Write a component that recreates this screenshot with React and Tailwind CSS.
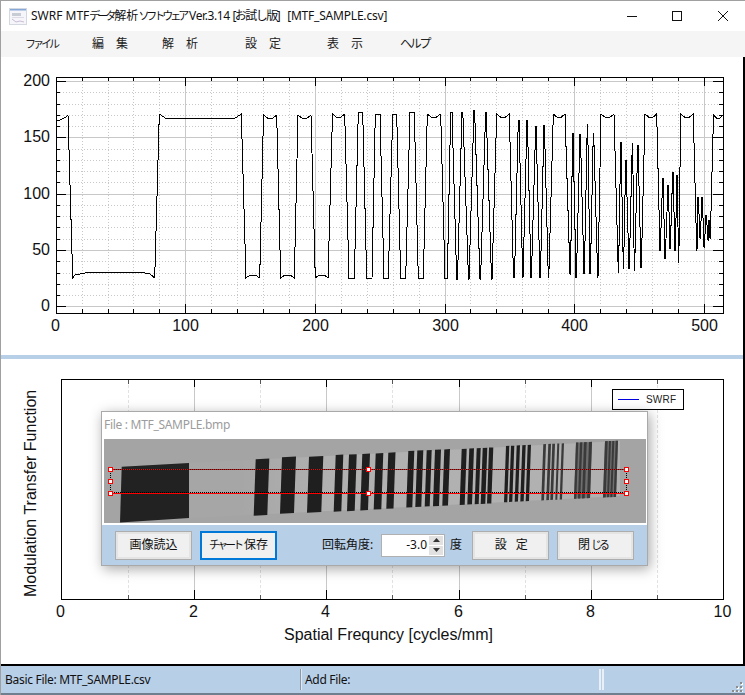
const uiFont = "font-['Noto_Sans','Noto_Sans_CJK_JP',sans-serif]";

// plateau segments of the scan line: [start, end, y], high and low in turn
const SIGNAL = [
  [159.3, 241.3, 114], [246, 259.7, 278], [263.5, 276.7, 115], [280.7, 294.3, 278], [298, 311, 115],
  [315.3, 328, 278], [332.5, 344.7, 114], [349, 354.3, 278], [358.3, 362.7, 112], [366.7, 372, 278],
  [375.3, 380, 114], [384, 388.3, 278], [392.7, 396.7, 114], [400.7, 405.7, 278], [410, 414.3, 112],
  [418.3, 423.3, 278], [427.3, 440.7, 114], [445, 447.3, 278], [450.7, 452, 112], [456.7, 457.5, 279],
  [462, 462.8, 112], [468.5, 469, 279], [474, 474.6, 110], [480, 480.6, 279], [485.6, 486.2, 112],
  [491.5, 492, 279], [496.7, 509.3, 114], [513.5, 514.5, 277], [518.3, 519, 120], [522.7, 523, 277],
  [527, 527.4, 120], [531, 531.4, 277], [535.7, 536, 126], [540, 540.4, 277], [544, 544.4, 125],
  [548.3, 548.8, 277], [553.3, 565, 114], [570, 570.5, 274], [572.7, 573, 133], [576, 576.4, 277],
  [580, 580.4, 134], [584, 584.4, 273], [587.3, 587.7, 124], [590, 590.4, 273], [593.3, 593.7, 133],
  [597.7, 598, 277], [601, 614, 114], [618.3, 618.6, 272], [620.7, 621, 142], [623.3, 623.6, 268],
  [625.7, 626, 160], [629, 629.3, 268], [632.3, 632.6, 143], [634.3, 634.6, 270], [637.7, 638, 145],
  [641, 641.3, 267], [645, 656.7, 114], [660, 660.3, 250], [662.7, 663, 178], [665, 665.3, 258],
  [668, 668.3, 185], [670, 670.3, 248], [672.7, 673, 172], [675, 675.3, 250], [677, 677.3, 175],
  [678.5, 678.8, 262], [680.7, 693.3, 114], [696.7, 697, 250], [698, 698.3, 197], [700, 700.3, 238],
  [702, 702.3, 197], [704, 704.3, 247], [706, 706.3, 215], [708, 708.3, 240], [709, 709.3, 220],
  [710, 710.3, 238], [713.5, 723, 115],
];

function signalPoints() {
  const pts = [[56, 121], [60, 120], [66, 117], [68, 115], [72.7, 278], [75, 275], [85, 273], [95, 272], [140, 272], [150, 274], [154.7, 278]];
  SIGNAL.forEach(([x0, x1, y]) => {
    const w = x1 - x0;
    const dir = y < 200 ? 1 : -1;
    if (w < 6) {
      pts.push([x0, y], [x1, y]);
    } else if (w > 40) {
      pts.push([x0, y], [x0 + 6, y + 4], [x1 - 6, y + 4], [x1, y]);
    } else {
      pts.push([x0, y], [x0 + w * 0.3, y + dir * 3], [x0 + w * 0.7, y + dir * 3], [x1, y]);
    }
  });
  return pts.map((p) => p.join(',')).join(' ');
}

const range = (from, to, step) => {
  const out = [];
  for (let v = from; v <= to; v += step) out.push(v);
  return out;
};

function WaveChart() {
  const px = (v) => Math.round(55.7 + 1.296 * v) + 0.5;
  const py = (v) => Math.round(306.3 - 1.1265 * v) + 0.5;
  return (
    <svg viewBox="1 57 742 298" className="block h-[298px] w-[742px] font-['Liberation_Sans',sans-serif] text-[16px]" shapeRendering="crispEdges">
      {range(20, 500, 20).filter((v) => v % 100).map((v) => (
        <g key={v}>
          <line x1={px(v)} x2={px(v)} y1="78" y2="313" stroke="#c8c8c8" strokeDasharray="1 2" />
          <line x1={px(v)} x2={px(v)} y1="78" y2="82" stroke="#000" />
          <line x1={px(v)} x2={px(v)} y1="309" y2="313" stroke="#000" />
        </g>
      ))}
      {range(0, 200, 10).filter((v) => v % 50).map((v) => (
        <g key={v}>
          <line x1="57" x2="723" y1={py(v)} y2={py(v)} stroke="#c8c8c8" strokeDasharray="1 2" />
          <line x1="57" x2="60" y1={py(v)} y2={py(v)} stroke="#000" />
          <line x1="719" x2="723" y1={py(v)} y2={py(v)} stroke="#000" />
        </g>
      ))}
      {range(0, 200, 50).map((v) => (
        <g key={v}>
          <line x1="57" x2="723" y1={py(v)} y2={py(v)} stroke="#c8c8c8" />
          <line x1="57" x2="66" y1={py(v)} y2={py(v)} stroke="#000" />
          <line x1="713" x2="723" y1={py(v)} y2={py(v)} stroke="#000" />
          <text x="50" y={py(v) + 4.5} textAnchor="end" fill="#111" shapeRendering="auto">{v}</text>
        </g>
      ))}
      {range(100, 500, 100).map((v) => (
        <g key={v}>
          <line x1={px(v)} x2={px(v)} y1="78" y2="313" stroke="#c8c8c8" />
          <line x1={px(v)} x2={px(v)} y1="78" y2="86" stroke="#000" />
          <line x1={px(v)} x2={px(v)} y1="304" y2="313" stroke="#000" />
          <text x={px(v)} y="331" textAnchor="middle" fill="#111">{v}</text>
        </g>
      ))}
      <text x="55.5" y="331" textAnchor="middle" fill="#111">0</text>
      <polyline points={signalPoints()} fill="none" stroke="#000" />
      <rect x="56.5" y="77.5" width="667" height="236" fill="none" stroke="#000" />
    </svg>
  );
}

function MtfChart() {
  const px = (v) => Math.round(61.3 + 66.2 * v) + 0.5;
  return (
    <svg viewBox="1 359 742 305" className="block h-[305px] w-[742px] font-['Liberation_Sans',sans-serif] text-[16px]" shapeRendering="crispEdges">
      {range(1, 9, 2).map((v) => (
        <g key={v}>
          <line x1={px(v)} x2={px(v)} y1="380" y2="599" stroke="#e2e2e2" strokeDasharray="3 2" />
          <line x1={px(v)} x2={px(v)} y1="380" y2="384" stroke="#555" />
          <line x1={px(v)} x2={px(v)} y1="595" y2="599" stroke="#555" />
        </g>
      ))}
      {range(2, 8, 2).map((v) => (
        <g key={v}>
          <line x1={px(v)} x2={px(v)} y1="380" y2="599" stroke="#c8c8c8" />
          <line x1={px(v)} x2={px(v)} y1="380" y2="387" stroke="#000" />
          <line x1={px(v)} x2={px(v)} y1="590" y2="599" stroke="#000" />
        </g>
      ))}
      <rect x="61.5" y="379.5" width="662" height="220" fill="none" stroke="#000" />
      {range(0, 10, 2).map((v) => (
        <text key={v} x={px(v) - 1} y="617" textAnchor="middle" fill="#111">{v}</text>
      ))}
      <text x="284" y="640" fill="#111">Spatial Frequncy [cycles/mm]</text>
      <text transform="translate(35.5 597) rotate(-90)" fill="#111">Modulation Transfer Function</text>
      <rect x="612.5" y="389.5" width="71" height="20" fill="#fff" stroke="#000" />
      <line x1="618" x2="639" y1="399.5" y2="399.5" stroke="#0000dd" />
      <text x="646" y="403" fill="#222" className="text-[10px] tracking-[0.2px]">SWRF</text>
    </svg>
  );
}

// bars of the test chart: [left, right, top at left, bottom at left]
const BARS = [
  [255.7, 269.3, 459.3, 515.7], [282, 296, 457.3, 513.7], [309, 323.3, 456.7, 512.7],
  [335.7, 343.3, 455, 511.7], [349, 356.7, 454.6, 511.2], [362.3, 370, 454, 510.5], [375.7, 383.3, 453.4, 509.6], [388.3, 395.5, 452.7, 508.8],
  [408.3, 414.3, 451, 507.5], [417.3, 423.3, 450.6, 507], [426.7, 431.7, 450.2, 506.6], [435, 441, 449.8, 506.2], [444.3, 450, 449.4, 505.8],
  [461.7, 466.7, 449, 505], [469.3, 474, 448.6, 504.6], [476.7, 480.7, 448.3, 504.3], [482.7, 487.3, 448, 504], [489, 493.3, 447.6, 503.6],
  [506, 509.3, 446, 502.3], [511, 514.3, 445.8, 502], [516.7, 520, 445.5, 501.7], [522.3, 525.7, 445.2, 501.5], [527.7, 531, 445, 501.2],
  [543.3, 546, 444.2, 500.4], [548.3, 551, 444, 500.2], [552.3, 555, 443.8, 500], [557.3, 559.3, 443.6, 499.8], [561.7, 564, 443.4, 499.6],
  [576, 578.3, 442.6, 498.8], [580, 582.3, 442.4, 498.6], [584, 586.7, 442.2, 498.4], [589, 592, 442, 498.2],
  [605, 607.7, 441.2, 497.4], [609, 611, 441, 497.2], [612.3, 614.3, 441, 497.2], [615.7, 618, 440.8, 497],
];

function Handle({ x, y }) {
  return <rect x={x - 2} y={y - 2} width="4" height="4" fill="#fff" stroke="#f00" />;
}

function ChartImage() {
  return (
    <svg viewBox="104 439 542 84" className="block h-[84px] w-[542px]">
      <defs>
        <linearGradient id="band" gradientUnits="userSpaceOnUse" x1="240" x2="330" y1="0" y2="0">
          <stop offset="0" stopColor="#a6a6a6" />
          <stop offset="1" stopColor="#b1b1b1" />
        </linearGradient>
      </defs>
      <rect x="104" y="439" width="542" height="84" fill="#a4a4a4" />
      <polygon points="190,463 620,441 620,496 190,518" fill="url(#band)" />
      <polygon points="121.7,466.7 189,463 189,518 120,522.5" fill="#222" />
      <polygon points="576,442.6 592,442 590,498 574,498.8" fill="#6e6e6e" />
      <polygon points="605,441.2 618,440.8 616,497 603,497.4" fill="#6e6e6e" />
      {BARS.map(([l, r, t, b]) => (
        <polygon key={l} points={`${l},${t} ${r},${t - (r - l) * 0.05} ${r - 2},${b - (r - l) * 0.05} ${l - 2},${b}`} fill={l > 540 ? '#3a3a3a' : '#1f1f1f'} />
      ))}
      <g shapeRendering="crispEdges">
        <line x1="110" x2="626" y1="469.5" y2="469.5" stroke="#f00" />
        <line x1="110" x2="626" y1="469.5" y2="469.5" stroke="#000" strokeDasharray="1 1" />
        <line x1="110" x2="626" y1="492.5" y2="492.5" stroke="#000" strokeDasharray="1 1" />
        <line x1="110" x2="626" y1="493.5" y2="493.5" stroke="#f00" />
        <line x1="110.5" x2="110.5" y1="469" y2="493" stroke="#000" strokeDasharray="1 1" />
        <line x1="626.5" x2="626.5" y1="469" y2="493" stroke="#000" strokeDasharray="1 1" />
        <Handle x={110.5} y={469.5} />
        <Handle x={110.5} y={481.5} />
        <Handle x={110.5} y={493.5} />
        <Handle x={368.5} y={469.5} />
        <Handle x={368.5} y={493.5} />
        <Handle x={626.5} y={469.5} />
        <Handle x={626.5} y={481.5} />
        <Handle x={626.5} y={493.5} />
      </g>
    </svg>
  );
}

// the original font sets kana condensed, so they get a smaller size and tighter pitch
function Kana({ children, className = '' }) {
  return <span className={`text-[11px] tracking-[-3px] ${className}`}>{children}</span>;
}

function DialogButton({ children, className = '', focused = false }) {
  return (
    <div
      className={`flex h-[29px] w-[77px] shrink-0 items-center justify-center bg-[#f0f0f0] text-[12px] text-[#111] ${
        focused ? 'border-2 border-[#0078d7]' : 'border border-[#adadad] shadow-[inset_0_0_0_2px_#e4e4e4]'
      } ${className}`}
    >
      {children}
    </div>
  );
}

function ImageDialog() {
  return (
    <div className={`absolute left-[100px] top-[52px] w-[547px] border border-[#a9a9a9] bg-white shadow-[2px_3px_12px_rgba(0,0,0,0.35)] ${uiFont}`}>
      <div className="flex h-[26px] items-center pl-[2px] text-[12px] tracking-[-0.3px] text-[#9c9c9c]">File : MTF_SAMPLE.bmp</div>
      <div className="mt-[1px] pl-[2px]">
        <ChartImage />
      </div>
      <div className="mt-[2px] flex h-[40px] items-center bg-[#b8cfe8] pl-[13px]">
        <DialogButton>画像読込</DialogButton>
        <DialogButton focused className="ml-[8px]">
          <Kana>チャート</Kana>
          <span className="ml-[3px]">保存</span>
        </DialogButton>
        <span className="ml-[45px] w-[53px] whitespace-nowrap text-[12px] text-[#111]">回転角度:</span>
        <div className="ml-[6px] flex h-[23px] w-[64px] items-center justify-end border border-[#b0b0b0] bg-white pr-[1px]">
          <span className="mr-[2px] text-[12px] text-[#111]">-3.0</span>
          <div className="flex w-[14px] flex-col gap-[1px]">
            <div className="flex h-[9px] items-center justify-center bg-[#e1e1e1]">
              <svg width="7" height="4" viewBox="0 0 7 4"><path d="M3.5 0 7 4H0z" fill="#333" /></svg>
            </div>
            <div className="flex h-[9px] items-center justify-center bg-[#e1e1e1]">
              <svg width="7" height="4" viewBox="0 0 7 4"><path d="M0 0h7L3.500 4z" fill="#333" /></svg>
            </div>
          </div>
        </div>
        <span className="ml-[5px] w-[22px] text-[12px] text-[#111]">度</span>
        <DialogButton className="tracking-[-1.5px]">設　定</DialogButton>
        <DialogButton className="ml-[8px] pr-[6px]">
          <span>閉</span>
          <Kana className="ml-[1px]">じる</Kana>
        </DialogButton>
      </div>
    </div>
  );
}

function AppIcon() {
  return (
    <svg width="18" height="17" viewBox="0 0 18 17" className="ml-[8px] shrink-0">
      <rect x="0.5" y="0.5" width="17" height="16" fill="#f6f6fa" stroke="#d4d8e0" />
      <rect x="1" y="1" width="16" height="1.500" fill="#86a8d8" />
      <rect x="3" y="5" width="9" height="3" fill="#c8ccd4" />
      <rect x="3" y="9" width="12" height="1" fill="#dcdce6" />
      <path d="M3 11l4 3 4-1 4 1" fill="none" stroke="#c8bcd6" />
    </svg>
  );
}

function WindowButtons() {
  return (
    <div className="ml-auto flex items-center">
      <svg width="10" height="10" viewBox="0 0 10 10" className="mr-[35px]"><path d="M0 5.500h10" stroke="#111" /></svg>
      <svg width="10" height="10" viewBox="0 0 10 10" className="mr-[36px]"><rect x="0.500" y="0.500" width="9" height="9" fill="none" stroke="#111" /></svg>
      <svg width="10" height="10" viewBox="0 0 10 10" className="mr-[17px]"><path d="M0 0l10 10M10 0 0 10" stroke="#111" /></svg>
    </div>
  );
}

function MenuBar() {
  return (
    <div className="flex h-[26px] items-center bg-[#f5f5f5] pl-[24px] text-[12px] text-[#222]">
      <Kana>ファイル</Kana>
      <span className="ml-[35px]">編　集</span>
      <span className="ml-[34px]">解　析</span>
      <span className="ml-[47px]">設　定</span>
      <span className="ml-[46px]">表　示</span>
      <span className="ml-[37px] tracking-[-2.300px]">ヘルプ</span>
    </div>
  );
}

function StatusBar() {
  return (
    <div className="flex h-[29px] items-center border-b-2 border-[#6f7f90] bg-[#b8cfe8] text-[12px] tracking-[-0.3px] text-[#111]">
      <span className="w-[299px] pl-[4px]">Basic File: MTF_SAMPLE.csv</span>
      <div className="h-[21px] w-[2px] border-r border-[#dfe8f2] bg-[#8c9aa8]" />
      <span className="w-[297px] pl-[3px]">Add File:</span>
      <div className="flex h-[21px] gap-[1px]">
        <div className="w-[2px] bg-[#e8eff7]" />
        <div className="w-[2px] bg-[#e8eff7]" />
      </div>
      <svg width="12" height="11" viewBox="0 0 12 11" className="ml-auto mr-[2px] mt-[14px]" shapeRendering="crispEdges">
        {[[9, 1], [5, 5], [9, 5], [1, 9], [5, 9], [9, 9]].map(([x, y]) => (
          <g key={`${x}-${y}`}>
            <rect x={x + 1} y={y + 1} width="2" height="2" fill="#fff" />
            <rect x={x} y={y} width="2" height="2" fill="#8c8c8c" />
          </g>
        ))}
      </svg>
    </div>
  );
}

export default function App() {
  return (
    <div className={`flex h-[695px] w-[745px] flex-col overflow-hidden border-l border-t border-[#a0a0a0] bg-white ${uiFont}`}>
      <div className="flex h-[30px] items-center bg-white">
        <AppIcon />
        <span className="ml-[4px] whitespace-pre text-[12px] text-[#111]">
          SWRF MTF
          <Kana>データ</Kana>
          <span className="ml-[1px]">解析</span>
          <Kana>ソフトウェア</Kana>
          <span className="tracking-[-0.4px]"> Ver.3.14 </span>
          <span className="tracking-[-1.5px]">[お試し版]</span>
          <span className="ml-[2px] tracking-[-0.2px]">  [MTF_SAMPLE.csv]</span>
        </span>
        <WindowButtons />
      </div>
      <MenuBar />
      <div className="w-[744px] border-b-2 border-r-2 border-black">
        <WaveChart />
        <div className="h-[4px] bg-[#b8cfe8]" />
        <div className="relative h-[305px]">
          <MtfChart />
          <ImageDialog />
        </div>
      </div>
      <StatusBar />
    </div>
  );
}
